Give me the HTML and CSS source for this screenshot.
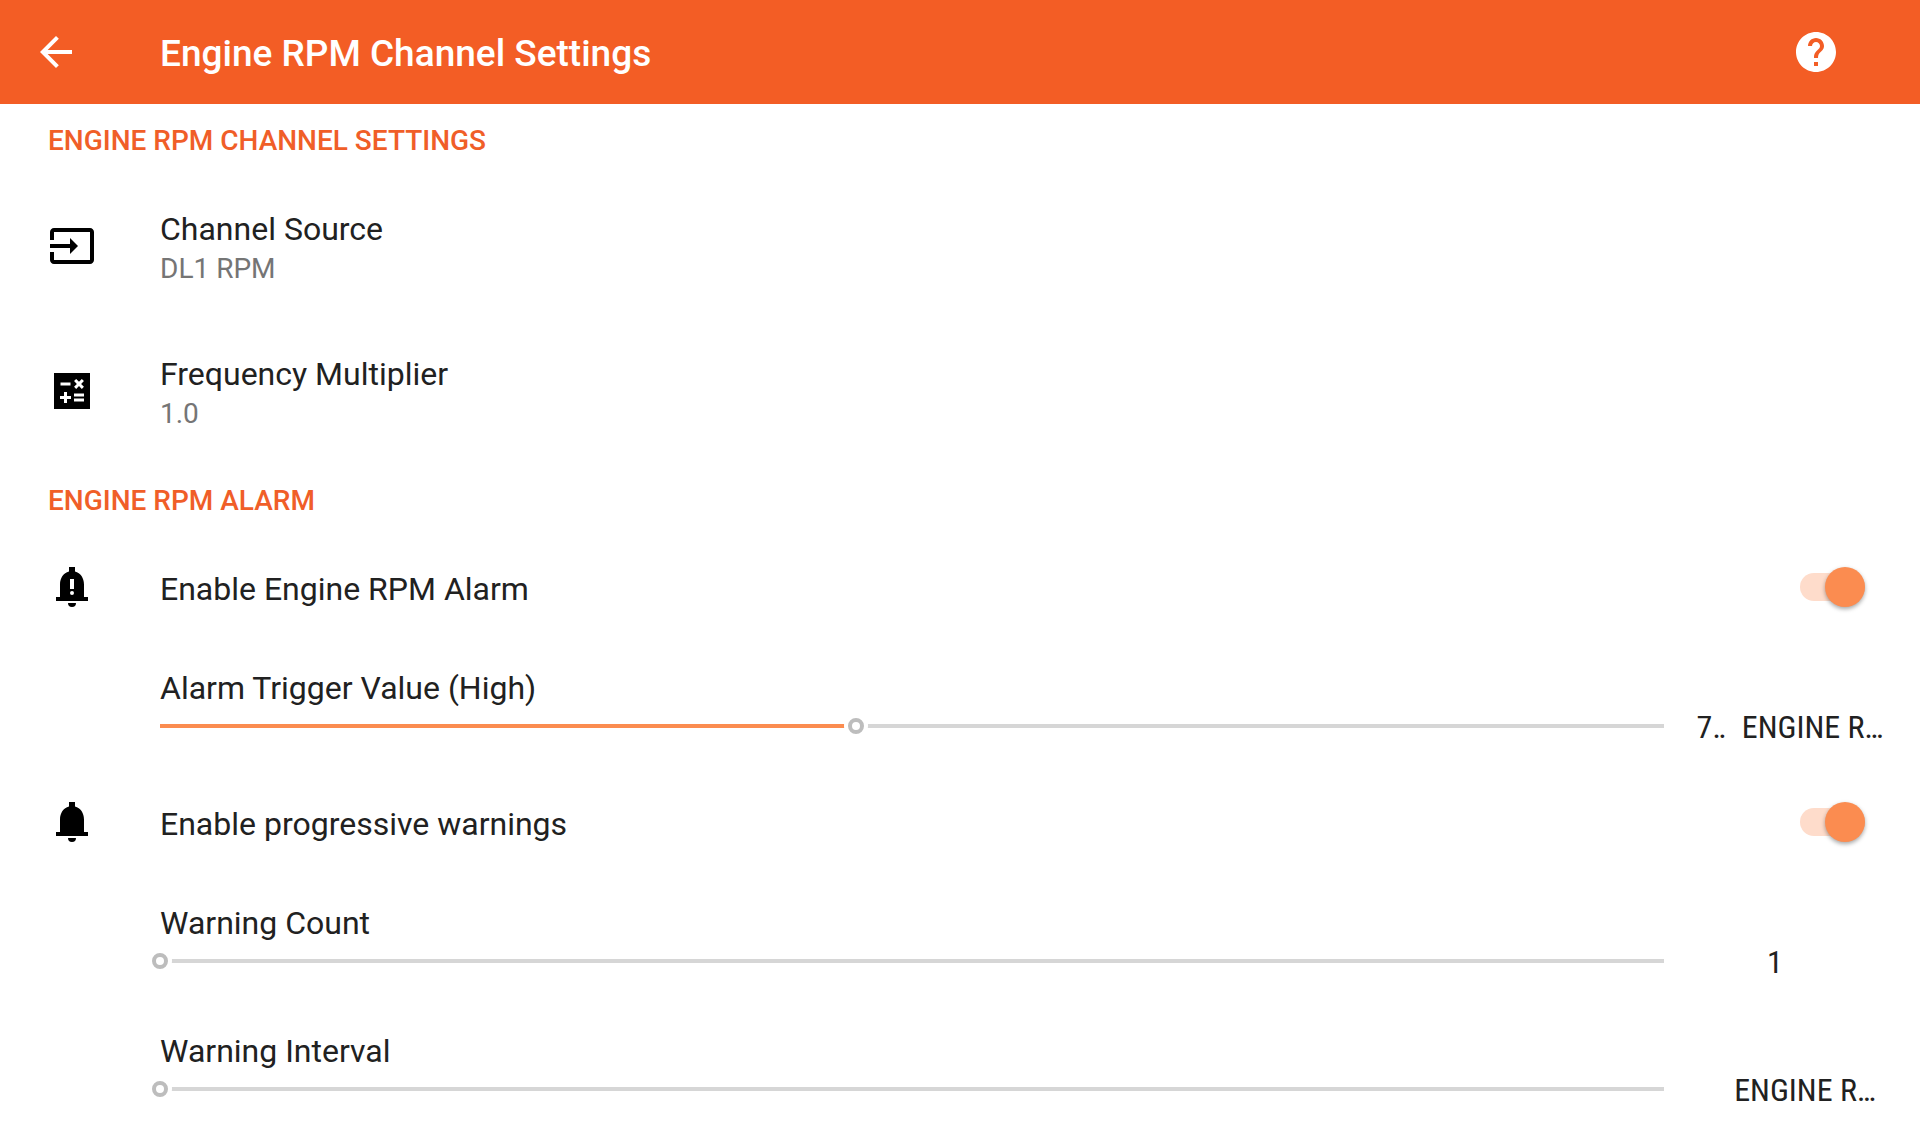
FILE: index.html
```html
<!DOCTYPE html>
<html lang="en">
<head>
  <meta charset="UTF-8">
  <meta name="viewport" content="width=device-width, initial-scale=1">
  <title>Engine RPM Channel Settings</title>
  <link rel="stylesheet" href="styles.css">
</head>
<body>
  <header class="app-bar">
    <button type="button" class="icon-btn" aria-label="Back">
      <svg class="icon" viewBox="0 0 24 24"><path d="M20 11H7.83l5.59-5.59L12 4l-8 8 8 8 1.41-1.41L7.83 13H20v-2z"/></svg>
    </button>
    <h1>Engine RPM Channel Settings</h1>
    <button type="button" class="icon-btn" aria-label="Help">
      <svg class="icon" viewBox="0 0 24 24"><path d="M12 2C6.48 2 2 6.48 2 12s4.48 10 10 10 10-4.48 10-10S17.52 2 12 2zm1 17h-2v-2h2v2zm2.07-7.75l-.9.92C13.45 12.9 13 13.5 13 15h-2v-.5c0-1.1.45-2.1 1.17-2.83l1.24-1.26c.37-.36.59-.86.59-1.41 0-1.1-.9-2-2-2s-2 .9-2 2H8c0-2.21 1.79-4 4-4s4 1.79 4 4c0 .88-.36 1.68-.93 2.25z"/></svg>
    </button>
  </header>

  <main>
    <h2 class="category">ENGINE RPM CHANNEL SETTINGS</h2>

    <button type="button" class="row row-pref">
      <svg class="icon" viewBox="0 0 24 24"><path d="M21 3H3c-1.1 0-2 .9-2 2v4h2V5h18v14H3v-4H1v4c0 1.1.9 2 2 2h18c1.1 0 2-.9 2-2V5c0-1.1-.9-2-2-2zM11 16l4-4-4-4v3H1v2h10v3z"/></svg>
      <span class="text">
        <span class="title">Channel Source</span>
        <span class="summary">DL1 RPM</span>
      </span>
    </button>

    <button type="button" class="row row-pref">
      <svg class="icon" viewBox="0 0 24 24"><path d="M21 3H3v18h18V3zm-7.97 4.06L14.09 6l1.41 1.41L16.91 6l1.06 1.06-1.41 1.41 1.41 1.41-1.06 1.06-1.41-1.4-1.41 1.41-1.06-1.06 1.41-1.41-1.41-1.42zM6.25 7.72h5v1.5h-5v-1.5zM11.5 16h-2v2H8v-2H6v-1.5h2v-2h1.5v2h2V16zm6.5 1.25h-5v-1.5h5v1.5zm0-2.5h-5v-1.5h5v1.5z"/></svg>
      <span class="text">
        <span class="title">Frequency Multiplier</span>
        <span class="summary">1.0</span>
      </span>
    </button>

    <h2 class="category">ENGINE RPM ALARM</h2>

    <div class="row row-switch">
      <svg class="icon" viewBox="0 0 24 24"><path fill-rule="evenodd" d="M10.5 2h3v2.3C16.3 5 18 7.6 18 10.7V17h2v2H4v-2h2v-6.3C6 7.6 7.7 5 10.5 4.3zM11 8v5h2V8zM12 14a1 1 0 1 0 0 2 1 1 0 0 0 0-2zM10 20h4a2 2 0 0 1-4 0z"/></svg>
      <label class="title" for="alarm">Enable Engine RPM Alarm</label>
      <input type="checkbox" role="switch" class="switch" id="alarm" checked>
    </div>

    <div class="row-slider">
      <label class="title" for="trigger">Alarm Trigger Value (High)</label>
      <div class="slider-line">
        <input type="range" class="slider" id="trigger" min="0" max="1000" value="463" style="--value: 0.463">
        <div class="reading reading-full"><span>7‥</span><span>ENGINE R…</span></div>
      </div>
    </div>

    <div class="row row-switch">
      <svg class="icon" viewBox="0 0 24 24"><path d="M10.5 2h3v2.3C16.3 5 18 7.6 18 10.7V17h2v2H4v-2h2v-6.3C6 7.6 7.7 5 10.5 4.3zM10 20h4a2 2 0 0 1-4 0z"/></svg>
      <label class="title" for="warnings">Enable progressive warnings</label>
      <input type="checkbox" role="switch" class="switch" id="warnings" checked>
    </div>

    <div class="row-slider">
      <label class="title" for="count">Warning Count</label>
      <div class="slider-line">
        <input type="range" class="slider" id="count" min="1" max="10" value="1" style="--value: 0">
        <div class="reading"><span>1</span><span></span></div>
      </div>
    </div>

    <div class="row-slider">
      <label class="title" for="interval">Warning Interval</label>
      <div class="slider-line">
        <input type="range" class="slider" id="interval" min="0" max="1000" value="0" style="--value: 0">
        <div class="reading"><span></span><span>ENGINE R…</span></div>
      </div>
    </div>
  </main>

  <script>
    // keep the coloured part of the track in step with the thumb
    document.querySelectorAll('.slider').forEach(slider => {
      slider.addEventListener('input', () => {
        const value = (slider.value - slider.min) / (slider.max - slider.min);
        slider.style.setProperty('--value', value);
      });
    });
  </script>
</body>
</html>
```
FILE: styles.css
```css
* {
  box-sizing: border-box;
}

body {
  margin: 0;
  font-family: Roboto, sans-serif;
  font-size: 32px;
  color: #212121;
  background: #fff;
}

button {
  border: none;
  padding: 0;
  background: none;
  font: inherit;
  color: inherit;
  text-align: left;
  cursor: pointer;
}

.icon {
  display: block;
  flex: none;
  width: 48px;
  height: 48px;
  fill: #000;
}

/* Top bar */
.app-bar {
  display: flex;
  align-items: center;
  height: 104px;
  padding: 0 80px 0 32px;
  background: #f35d25;
  color: #fff;
}

.app-bar h1 {
  flex: 1;
  margin: 0 0 0 80px;
  padding-top: 4px;
  font-size: 37px;
  font-weight: 500;
  line-height: 44px;
}

.icon-btn .icon {
  fill: #fff;
}

.category {
  display: flex;
  align-items: center;
  height: 70px;
  margin: 0;
  padding: 2px 48px 0;
  font-size: 28px;
  font-weight: 500;
  color: #f05e28;
}

/* Preference rows */
.row {
  display: flex;
  align-items: center;
  gap: 64px;
  width: 100%;
  padding: 0 55px 1px 48px;
}

.row-pref {
  height: 145px;
}

.row-switch {
  height: 107px;
}

.row-switch .title {
  flex: 1;
  padding-top: 3px;
}

.text {
  display: flex;
  flex-direction: column;
  padding-top: 6px;
}

.title {
  font-size: 32px;
  line-height: 40px;
}

.summary {
  font-size: 28px;
  line-height: 40px;
  color: #757575;
}

/* Switch */
.switch {
  appearance: none;
  display: grid;
  align-items: center;
  width: 65px;
  height: 40px;
  margin: 0;
  cursor: pointer;
}

.switch::before,
.switch::after {
  content: '';
  grid-area: 1 / 1;
}

.switch::before {
  height: 28px;
  border-radius: 14px;
  background: #d6d6d6;
}

.switch::after {
  width: 40px;
  height: 40px;
  border-radius: 50%;
  background: #f5f5f5;
  box-shadow: 0 2px 4px rgba(0, 0, 0, 0.35);
}

.switch:checked::before {
  background: #fedccb;
}

.switch:checked::after {
  justify-self: end;
  background: #fb8c50;
}

/* Slider rows */
.row-slider {
  display: flex;
  flex-direction: column;
  height: 128px;
  padding: 27px 34px 0 160px;
}

.slider-line {
  display: flex;
  align-items: center;
  gap: 22px;
  height: 36px;
}

.slider {
  appearance: none;
  flex: 1;
  min-width: 0;
  height: 24px;
  margin: 0 0 0 -8px;
  background-color: transparent;
  background-image:
    linear-gradient(#fb8c50, #fb8c50),
    linear-gradient(#d6d6d6, #d6d6d6);
  background-position: 8px center;
  background-size:
    calc((100% - 16px) * var(--value)) 4px,
    calc(100% - 16px) 4px;
  background-repeat: no-repeat;
  cursor: pointer;
}

.slider::-webkit-slider-thumb {
  appearance: none;
  width: 16px;
  height: 16px;
  border: 4px solid #bdbdbd;
  border-radius: 50%;
  background: #fff;
  box-shadow: 0 0 0 4px #fff;
}

.reading {
  display: flex;
  justify-content: center;
  gap: 30px;
  width: 192px;
  padding-top: 2px;
  font-family: "Roboto Condensed", Roboto, sans-serif;
  font-size: 32px;
  line-height: 36px;
  white-space: nowrap;
}

.reading-full {
  gap: 16px;
}
```
